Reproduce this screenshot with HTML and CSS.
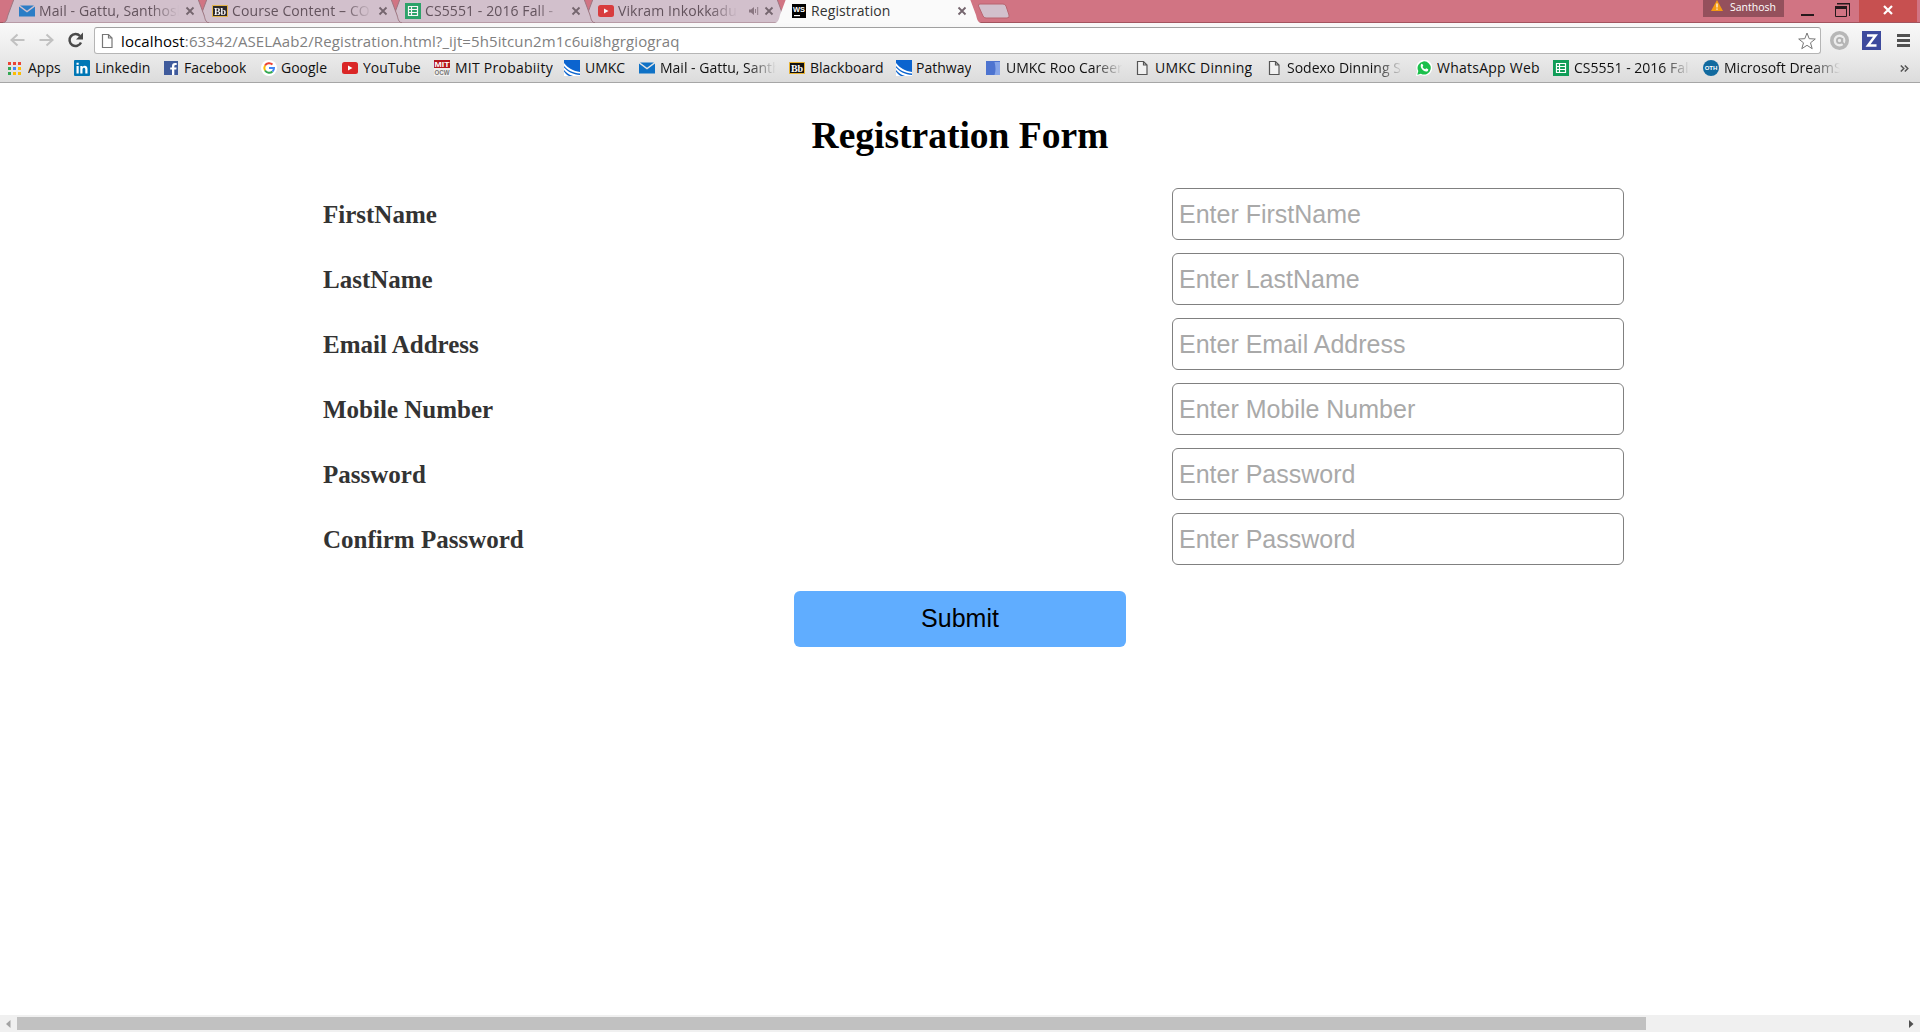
FILE: index.html
```html
<!DOCTYPE html>
<html lang="en">
<head>
<meta charset="utf-8">
<title>Registration</title>
<link rel="stylesheet" href="styles.css">
</head>
<body>
<svg class="defs" width="0" height="0">
  <symbol id="tab" viewBox="0 0 206 23"><path d="M0 23C4 22 4 18 5 15L11-1H195L201 15C202 18 202 22 206 23Z"/></symbol>
  <symbol id="x" viewBox="0 0 10 10"><path d="M1.500 1.500l7 7m0-7l-7 7" fill="none" stroke="currentColor" stroke-width="1.800"/></symbol>
  <symbol id="mail" viewBox="0 0 16 16"><path fill="#0f72c6" d="M0 3.500l8 6 8-6V13.500H0z"/><path fill="#0f72c6" d="M1 2.500h14L8 7.700z"/></symbol>
  <symbol id="bb" viewBox="0 0 16 16"><path fill="#111" stroke="#e9b431" d="M.5 2.500h15v11H.5z"/><text x="8" y="11.500" text-anchor="middle" class="glyph serif" font-size="10" fill="#fff">Bb</text></symbol>
  <symbol id="sheet" viewBox="0 0 16 16"><path fill="#109d58" d="M0 0h16v16H0z"/><path fill="none" stroke="#fff" stroke-width="1.200" d="M3.500 3.500h9v9h-9zM3.500 6.500h9M3.500 9.500h9M6.500 3.500v9"/></symbol>
  <symbol id="yt" viewBox="0 0 16 16"><rect y="2" width="16" height="12" rx="2.500" fill="#da2626"/><path fill="#fff" d="M6 5.500v5L10.500 8z"/></symbol>
  <symbol id="umkc" viewBox="0 0 16 16"><path fill="#0b64cf" d="M0 0h16v16H0z"/><path fill="#fff" d="M0 3C4 8 9 11 16 12v1.500C9 13 4 10.500 0 6zM0 7.500C4 12 9 14.500 16 15v1H9C5 15 2 12.500 0 10z"/><path fill="#fff" d="M0 11.500V16h5C3 15 1.500 13.500 0 11.500z"/></symbol>
  <symbol id="page" viewBox="0 0 16 16"><path fill="#fff" fill-opacity=".5" stroke="currentColor" stroke-width="1.200" d="M3.500 1.500h6l3.500 3.500v9.500H3.500zM9.500 1.500V5H13"/></symbol>
</svg>

<header class="browser">
  <div class="tabstrip">
    <nav class="tabs">
      <div class="tab"><svg class="shape"><use href="#tab"/></svg><svg class="icon"><use href="#mail"/></svg><span class="label fade">Mail - Gattu, Santhosh</span><svg class="close"><use href="#x"/></svg></div>
      <div class="tab"><svg class="shape"><use href="#tab"/></svg><svg class="icon"><use href="#bb"/></svg><span class="label fade">Course Content – CO</span><svg class="close"><use href="#x"/></svg></div>
      <div class="tab"><svg class="shape"><use href="#tab"/></svg><svg class="icon"><use href="#sheet"/></svg><span class="label fade">CS5551 - 2016 Fall -</span><svg class="close"><use href="#x"/></svg></div>
      <div class="tab"><svg class="shape"><use href="#tab"/></svg><svg class="icon"><use href="#yt"/></svg><span class="label fade audio-label">Vikram Inkokkadu</span><svg class="speaker" viewBox="0 0 10 10"><path fill="currentColor" d="M0 3.500h2L5 1v8L2 6.500H0z"/><path d="M6.500 3v4M8.700 1v8" stroke="currentColor" stroke-width=".9"/></svg><svg class="close"><use href="#x"/></svg></div>
      <div class="tab active"><svg class="shape"><use href="#tab"/></svg><svg class="icon" viewBox="0 0 16 16"><path d="M1 1h14v14H1z"/><text x="8" y="9" text-anchor="middle" class="glyph" font-size="8" textLength="12" lengthAdjust="spacingAndGlyphs" fill="#fff">WS</text><path fill="#fff" d="M3 12h6v1.200H3z"/></svg><span class="label">Registration</span><svg class="close"><use href="#x"/></svg></div>
    </nav>
    <svg class="newtab" viewBox="0 0 33 16"><path d="M3 1h23q2 0 3 2l3 9q1 3-2 3H9q-2 0-3-2L1.500 3Q1 1 3 1z" fill="#d2c0cc" stroke="#b8636f"/></svg>
    <div class="profile"><svg width="12" height="11" viewBox="0 0 12 11"><path fill="#f49a13" d="M6 0l6 11H0z"/><path fill="#fff" d="M5.400 3.500h1.200v4H5.400zM5.400 8.500h1.200v1.200H5.400z"/></svg><span>Santhosh</span></div>
    <svg class="minimise" viewBox="0 0 13 3"><path fill="#26191c" d="M0 0h13v2H0z"/></svg>
    <svg class="restore" viewBox="0 0 15 15"><path fill="none" stroke="#26191c" d="M2 .5h12.500V13M.5 3.500h11v10H.5z"/><path fill="#26191c" d="M0 3h12v3H0zM2 0h13v1.500H2z"/></svg>
    <div class="quit"><svg width="10" height="10"><path d="M1 1l8 8m0-8L1 9" stroke="#fff" stroke-width="2.200"/></svg></div>
  </div>
  <div class="toolbar">
    <svg class="nav" viewBox="0 0 16 16"><path fill="none" stroke="#c1c1c1" stroke-width="2" d="M15 8H2M8 2.500L2 8l6 5.500"/></svg>
    <svg class="nav forward" viewBox="0 0 16 16"><path fill="none" stroke="#c1c1c1" stroke-width="2" d="M1 8h13M8 2.500L14 8l-6 5.500"/></svg>
    <svg class="nav reload" viewBox="0 0 16 16"><path fill="none" stroke="#4a4a4a" stroke-width="2.500" d="M13.500 10.500A6 6 0 1 1 12.500 4"/><path fill="#4a4a4a" d="M15.500 .5V7.500H8.500z"/></svg>
    <div class="omnibox"><svg class="icon"><use href="#page"/></svg><span class="url"><b>localhost</b>:63342/ASELAab2/Registration.html?_ijt=5h5itcun2m1c6ui8hgrgiograq</span>
      <svg class="star" viewBox="0 0 18 18"><path fill="#fff" stroke="#777" d="M9 1l2.200 5.700 6.100.3-4.800 3.800 1.700 5.900L9 13.300l-5.200 3.400 1.700-5.900L.7 7l6.100-.3z"/></svg></div>
    <svg class="ext" viewBox="0 0 19 19"><circle cx="9.500" cy="9.500" r="7.700" fill="#ececec" stroke="#b7b7b7" stroke-width="3.600"/><circle cx="9.500" cy="9.500" r="2.600" fill="none" stroke="#b3b3b3" stroke-width="1.800"/><path fill="none" stroke="#b3b3b3" stroke-width="1.800" d="M12.300 7v4.500l2 2"/></svg>
    <svg class="ext zotero" viewBox="0 0 19 19"><path fill="#3d4a9d" d="M0 0h19v19H0z"/><path fill="none" stroke="#fff" stroke-width="2.500" d="M5 4.500h8.500L6 14.500h8.500"/></svg>
    <svg class="menu" viewBox="0 0 13 13"><path fill="#505050" d="M0 0h13v3H0zM0 5h13v3H0zM0 10h13v3H0z"/></svg>
  </div>
  <nav class="bookmarks">
    <a><svg class="icon" viewBox="0 0 16 16"><path fill="#ea4335" d="M1 2h3v3H1zM6 2h3v3H6zM11 2h3v3h-3z"/><path fill="#34a853" d="M1 7h3v3H1zM1 12h3v3H1z"/><path fill="#4285f4" d="M6 7h3v3H6z"/><path fill="#fbbc05" d="M11 7h3v3h-3zM6 12h3v3H6zM11 12h3v3h-3z"/></svg><span>Apps</span></a>
    <a><svg class="icon" viewBox="0 0 16 16"><rect width="16" height="16" rx="1" fill="#0077b5"/><path fill="#fff" d="M2.500 6h2.200v7.500H2.500zM2.500 2.700h2.200v2H2.500zM6.300 6h2.200v1C10 5 13.500 5.500 13.500 9v4.500h-2.200V9.500c0-2.500-2.800-2.200-2.800 0v4H6.300z"/></svg><span>Linkedin</span></a>
    <a><svg class="icon" viewBox="0 0 16 16"><path fill="#3f5b9c" d="M1 1h14v14H1z"/><path fill="#fff" d="M9 15V9.500H7.200v-2H9V6q0-3 3-3h1.700v2H12.500q-1.200 0-1.200 1.200v1.300h2.300l-.3 2h-2V15z"/></svg><span>Facebook</span></a>
    <a class="tight"><svg class="icon" viewBox="0 0 16 16"><circle cx="8" cy="8" r="8" fill="#fff"/><g fill="none" stroke-width="2"><path stroke="#ea4335" d="M4 5.500A5 5 0 0 1 11.500 4.500"/><path stroke="#fbbc05" d="M4 5.500a5 5 0 0 0 0 5"/><path stroke="#34a853" d="M4 10.500a5 5 0 0 0 7.500 1"/><path stroke="#4285f4" d="M11.500 11.500Q13 10 13 8H8"/></g></svg><span>Google</span></a>
    <a><svg class="icon"><use href="#yt"/></svg><span>YouTube</span></a>
    <a class="wide"><svg class="icon" viewBox="0 0 16 16"><path fill="#b4161e" d="M0 0h16v8H0z"/><path fill="#eee" d="M0 8h16v8H0z"/><text x="8" y="7" text-anchor="middle" class="glyph" font-size="8" textLength="15" lengthAdjust="spacingAndGlyphs" fill="#fff">MIT</text><text x="8" y="15" text-anchor="middle" class="glyph" font-size="8" textLength="15" lengthAdjust="spacingAndGlyphs" fill="#777">OCW</text></svg><span>MIT Probabiity</span></a>
    <a><svg class="icon"><use href="#umkc"/></svg><span>UMKC</span></a>
    <a><svg class="icon"><use href="#mail"/></svg><span class="fade">Mail - Gattu, Santh</span></a>
    <a><svg class="icon"><use href="#bb"/></svg><span>Blackboard</span></a>
    <a class="tight"><svg class="icon"><use href="#umkc"/></svg><span>Pathway</span></a>
    <a><svg class="icon" viewBox="0 0 16 16"><path fill="#4d74d0" d="M1 1h14v14H1z"/><path fill="#86a5e8" d="M9.500 2H15v13H9.500q2-6 0-13z"/></svg><span class="fade">UMKC Roo Career</span></a>
    <a class="wide"><svg class="icon"><use href="#page"/></svg><span>UMKC Dinning</span></a>
    <a><svg class="icon"><use href="#page"/></svg><span class="fade">Sodexo Dinning S</span></a>
    <a class="wide"><svg class="icon" viewBox="0 0 16 16"><path fill="#fff" d="M0 16l1-5A8 8 0 1 1 5 15z"/><path fill="#1bc04c" d="M1.300 14.700l1-3.700a6.600 6.600 0 1 1 2.600 2.700z"/><path fill="#fff" d="M5 4.200q1-1 1.700.2l.6 1.400-.8 1.100q1 1.700 2.700 2.400l1-1 2 .9q.3 1.500-1 2.200-1.700.6-4.200-1.200Q3.800 7.200 5 4.200z"/></svg><span>WhatsApp Web</span></a>
    <a><svg class="icon"><use href="#sheet"/></svg><span class="fade">CS5551 - 2016 Fall</span></a>
    <a><svg class="icon" viewBox="0 0 16 16"><circle cx="8" cy="8" r="8" fill="#116a9f"/><text x="8" y="10.200" text-anchor="middle" class="glyph" font-size="6" fill="#fff">OTH</text></svg><span class="fade">Microsoft DreamS</span></a>
    <svg class="more" viewBox="0 0 9 7"><path fill="none" stroke="#555" stroke-width="1.500" d="M.8 .5l3 3-3 3M4.800 .5l3 3-3 3"/></svg>
  </nav>
</header>

<main class="page">
  <h1>Registration Form</h1>
  <form class="form">
    <label for="first">FirstName</label><input id="first" type="text" placeholder="Enter FirstName">
    <label for="last">LastName</label><input id="last" type="text" placeholder="Enter LastName">
    <label for="email">Email Address</label><input id="email" type="text" placeholder="Enter Email Address">
    <label for="mobile">Mobile Number</label><input id="mobile" type="text" placeholder="Enter Mobile Number">
    <label for="pass">Password</label><input id="pass" type="password" placeholder="Enter Password">
    <label for="confirm">Confirm Password</label><input id="confirm" type="password" placeholder="Enter Password">
  </form>
  <button class="submit" type="button">Submit</button>
</main>

<footer class="scrollbar">
  <svg width="5" height="8" viewBox="0 0 5 8"><path fill="#a3a3a3" d="M4.500 0v8L0 4z"/></svg>
  <div class="track"><div class="thumb"></div></div>
  <svg width="5" height="8" viewBox="0 0 5 8"><path fill="#505050" d="M0 0v8l4.500-4z"/></svg>
</footer>
</body>
</html>
```
FILE: styles.css
```css
* { box-sizing: border-box; }
body {
  margin: 0;
  height: 1032px;
  display: flex;
  flex-direction: column;
  overflow: hidden;
  background: #fff;
}
svg { flex: none; display: block; }
.defs { position: absolute; }
.glyph { font-family: "Liberation Sans", sans-serif; font-weight: bold; }
.serif { font-family: "Liberation Serif", serif; }
.icon { width: 16px; height: 16px; }

.browser {
  height: 83px;
  flex: none;
  font: 14px/20px "Open Sans", sans-serif;
  color: #111;
  background: linear-gradient(#f9f9f9 23px, #eee 48px, #dcdcdc 82px);
  border-bottom: 1px solid #a6a6a6;
}
.tabstrip {
  height: 23px;
  display: flex;
  align-items: flex-start;
  background: #d17483;
  box-shadow: inset 0 -1px #a2545f;
}
.tabs { display: flex; padding-left: 3px; width: 977px; flex: none; }
.tab {
  position: relative;
  z-index: 1;
  width: 206px;
  height: 23px;
  margin-right: -13px;
  padding: 0 14px 1px 16px;
  display: flex;
  flex: none;
  align-items: center;
  color: #63535d;
}
.tab:nth-child(1) { z-index: 4; }
.tab:nth-child(2) { z-index: 3; }
.tab:nth-child(3) { z-index: 2; }
.tab.active { z-index: 5; color: #333; }
.shape {
  position: absolute;
  z-index: -1;
  left: 0;
  top: 0;
  width: 206px;
  height: 23px;
  fill: #d2c0cc;
  stroke: #9d7681;
}
.active .shape { fill: #fafafa; stroke: none; }
.tab:not(.active) .icon { opacity: .85; }
.tab .label {
  margin: -1px 0 0 4px;
  width: 140px;
  overflow: hidden;
  white-space: nowrap;
  letter-spacing: .1px;
}
.tab .audio-label { width: 120px; }
.speaker { width: 10px; height: 10px; margin-left: 11px; color: #897681; }
.tab .close { width: 10px; height: 10px; margin-left: auto; color: #74656e; }
.fade {
  -webkit-mask-image: linear-gradient(to right, #000 calc(100% - 28px), transparent);
  mask-image: linear-gradient(to right, #000 calc(100% - 28px), transparent);
}
.newtab { width: 33px; height: 16px; margin-top: 3px; }
.profile {
  width: 81px;
  height: 17px;
  margin-left: auto;
  padding: 0 8px;
  display: flex;
  justify-content: space-between;
  align-items: flex-start;
  background: #94505c;
  color: #fff;
  font-size: 10.5px;
  line-height: 14px;
}
.minimise { width: 13px; height: 3px; margin: 14px 0 0 17px; }
.restore { width: 15px; height: 15px; margin: 3px 0 0 21px; }
.quit {
  width: 58px;
  height: 22px;
  margin: 0 3px 0 9px;
  padding-top: 5px;
  display: flex;
  justify-content: center;
  align-items: flex-start;
  background: #c75050;
}

.toolbar { height: 33px; display: flex; padding: 4px 10px 0 9px; align-items: flex-start; }
.nav { width: 17px; height: 16px; margin-top: 5px; }
.forward { margin-left: 12px; }
.reload { margin-left: 12px; }
.omnibox {
  width: 1727px;
  height: 27px;
  margin-left: 10px;
  padding: 0 4px;
  display: flex;
  flex: none;
  align-items: center;
  background: #fff;
  border: 1px solid #b5b5b5;
  border-top-color: #a0a0a0;
  border-radius: 3px;
  color: #777;
}
.omnibox .icon { height: 18px; }
.url {
  margin-left: 6px;
  color: #808080;
  font-size: 15px;
  letter-spacing: .11px;
}
.url b { font-weight: 400; color: #000; }
.star { width: 18px; height: 18px; margin-left: auto; }
.ext { width: 19px; height: 19px; margin: 4px 0 0 9px; }
.zotero { margin-left: 13px; }
.menu { width: 13px; height: 13px; margin: 7px 0 0 16px; }

.bookmarks {
  height: 24px;
  padding: 0 11px 0 7px;
  display: grid;
  grid-template-columns: 67px 89px 98px 81px 92px 130px 75px 150px 107px 89px 149px 132px 150px 137px 150px 150px auto;
  align-items: center;
}
.bookmarks a { display: flex; align-items: center; min-width: 0; white-space: nowrap; }
.bookmarks .icon { color: #555; }
.bookmarks span { margin: -1px 0 0 5px; overflow: hidden; }
.bookmarks .tight span { margin-left: 4px; }
.bookmarks .wide span { letter-spacing: .25px; }
.bookmarks .fade { width: 116px; }
.more { width: 9px; height: 7px; justify-self: end; }

.page { flex: 1; display: flex; flex-direction: column; align-items: center; }
.page h1 {
  margin: 31px 0 0;
  font: bold 37.5px/44px "Liberation Serif", serif;
  color: #000;
}
.form {
  width: 1301px;
  margin: 30px 0 0 27px;
  display: grid;
  grid-template-columns: 849px 452px;
  row-gap: 13px;
  align-items: center;
}
.form label { padding-top: 2px; font: bold 25px/30px "Liberation Serif", serif; color: #333; }
.form input {
  width: 452px;
  height: 52px;
  padding: 1px 6px 0;
  border: 1px solid #808080;
  border-radius: 6px;
  background: #fff;
  font: 25px "Liberation Sans", sans-serif;
}
.form input::placeholder { color: #a9a9a9; opacity: 1; }
.submit {
  width: 332px;
  height: 56px;
  margin-top: 26px;
  padding: 0 0 2px;
  border: 0;
  border-radius: 6px;
  background: #60adff;
  color: #000;
  font: 25px "Liberation Sans", sans-serif;
}

.scrollbar {
  height: 17px;
  flex: none;
  padding: 0 6px;
  display: flex;
  align-items: center;
  background: #f0f0f0;
}
.track { flex: 1; padding-left: 6px; }
.thumb { width: 1629px; height: 13px; background: #c1c1c1; }
```
